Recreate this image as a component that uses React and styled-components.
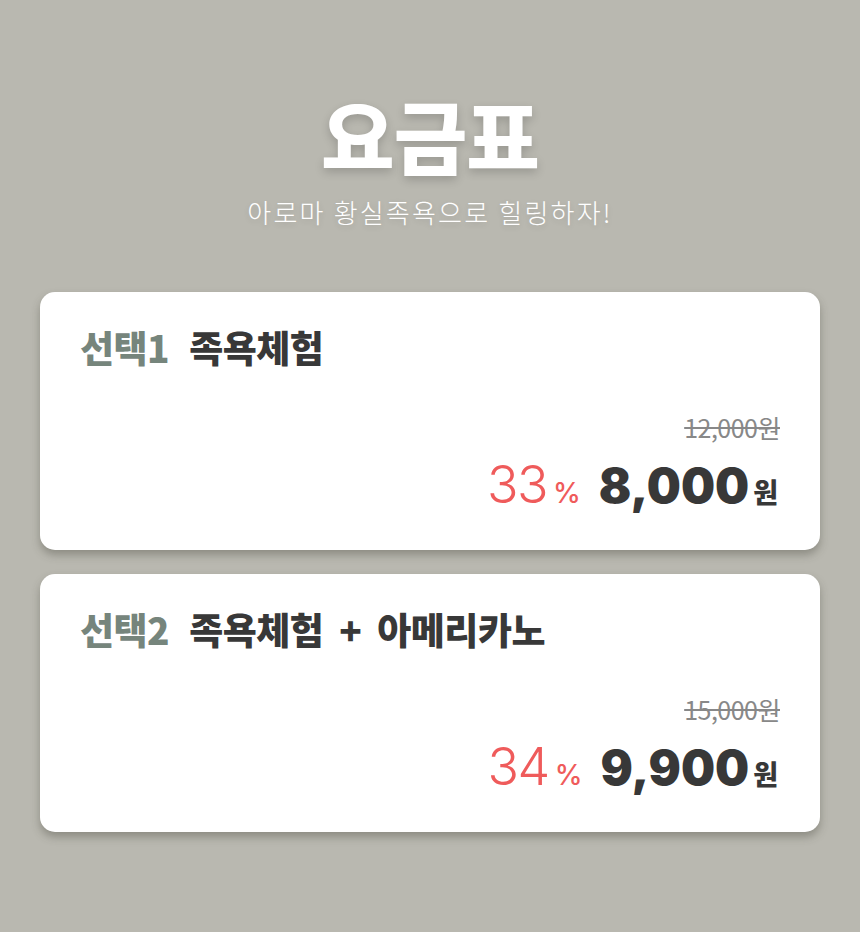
import * as React from 'react'
import styled, { createGlobalStyle } from 'styled-components'

const plans = [
  { no: 1, name: '족욕체험', original: '12,000원', rate: 33, price: '8,000' },
  { no: 2, name: '족욕체험 + 아메리카노', original: '15,000원', rate: 34, price: '9,900' },
]

const App = () => {
  return (
    <Page>
      <GlobalStyle />
      <Header>
        <Title>요금표</Title>
        <Subtitle>아로마 황실족욕으로 힐링하자!</Subtitle>
      </Header>
      <List>
        {plans.map((plan) => (
          <Card key={plan.no}>
            <CardTitle>
              <Label>선택{plan.no}</Label>
              <Name>{plan.name}</Name>
            </CardTitle>
            <PriceBox>
              <Original>{plan.original}</Original>
              <PriceRow>
                <Rate>
                  {plan.rate}
                  <Percent>%</Percent>
                </Rate>
                <Price>
                  {plan.price}
                  <Won>원</Won>
                </Price>
              </PriceRow>
            </PriceBox>
          </Card>
        ))}
      </List>
    </Page>
  )
}

const GlobalStyle = createGlobalStyle`
  html, body {
    margin: 0;
    padding: 0;
    background: #b9b8b0;
  }
  body {
    font-family: "Noto Sans CJK KR", "Noto Sans", sans-serif;
  }
`

const Page = styled.div`
  width: 860px;
  min-height: 932px;
  background: #b9b8b0;
  padding-top: 75px;
  box-sizing: border-box;
`

const Header = styled.header`
  display: flex;
  flex-direction: column;
  align-items: center;
  color: #fff;
`

const Title = styled.h1`
  margin: 0;
  font-size: 80px;
  font-weight: 900;
  line-height: 116px;
  letter-spacing: -1px;
  text-shadow: 0 4px 10px rgba(0, 0, 0, 0.18);
`

const Subtitle = styled.p`
  margin: 2px 0 0;
  font-size: 26px;
  font-weight: 300;
  line-height: 38px;
  letter-spacing: 2.2px;
  text-shadow: 0 2px 6px rgba(0, 0, 0, 0.12);
`

const List = styled.div`
  display: flex;
  flex-direction: column;
  gap: 24px;
  padding: 61px 40px 0;
`

const Card = styled.div`
  background: #fff;
  border-radius: 15px;
  box-shadow: 0 5px 8px rgba(60, 60, 50, 0.35);
  height: 258px;
  box-sizing: border-box;
  padding: 28px 40px 0;
  display: flex;
  flex-direction: column;
`

const CardTitle = styled.h2`
  margin: 0;
  display: flex;
  align-items: baseline;
  gap: 20px;
  font-size: 37px;
  font-weight: 900;
  line-height: 54px;
  letter-spacing: -0.5px;
`

const Label = styled.span`
  color: #76857c;
`

const Name = styled.span`
  color: #383838;
  word-spacing: 8px;
`

const PriceBox = styled.div`
  margin-top: 35px;
  display: flex;
  flex-direction: column;
  align-items: flex-end;
`

const Original = styled.span`
  font-size: 25px;
  font-weight: 400;
  color: #888;
  line-height: 36px;
  letter-spacing: -0.5px;
  text-decoration: line-through;
  text-decoration-thickness: 2px;
`

const PriceRow = styled.div`
  display: flex;
  align-items: baseline;
  gap: 18px;
  margin-top: 8px;
  padding-right: 2px;
`

const Rate = styled.span`
  font-family: Inter, "Noto Sans CJK KR", sans-serif;
  font-size: 52px;
  font-weight: 300;
  color: #ef5b5b;
  letter-spacing: -1.5px;
  line-height: 64px;
`

const Percent = styled.span`
  font-size: 28px;
  font-weight: 500;
  margin-left: 6px;
  letter-spacing: 0;
`

const Price = styled.span`
  font-family: Inter, "Noto Sans CJK KR", sans-serif;
  font-size: 48px;
  font-weight: 900;
  color: #383838;
  letter-spacing: 0;
  line-height: 64px;
`

const Won = styled.span`
  font-family: "Noto Sans CJK KR", sans-serif;
  font-size: 27px;
  font-weight: 900;
  margin-left: 4px;
  letter-spacing: 0;
`

export default App
